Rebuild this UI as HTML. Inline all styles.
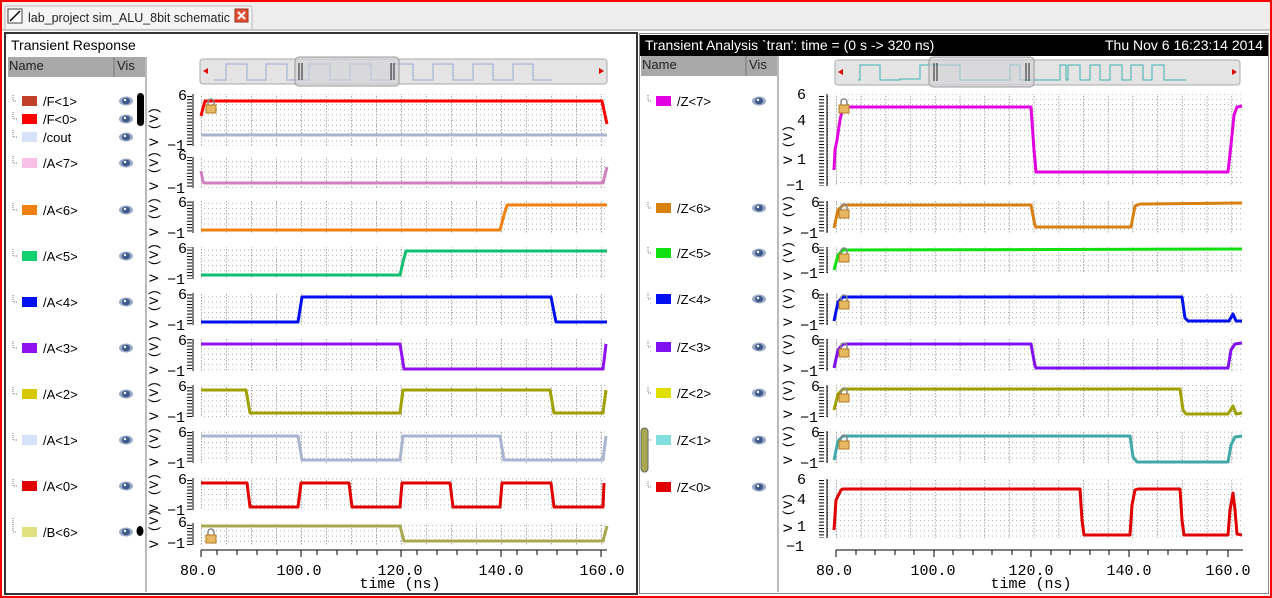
<!DOCTYPE html>
<html><head><meta charset="utf-8"><style>
body{margin:0;width:1272px;height:598px;overflow:hidden;background:#fff;font-family:"Liberation Sans",sans-serif}
svg{display:block}
</style></head><body>
<svg width="1272" height="598" xmlns="http://www.w3.org/2000/svg" font-family="Liberation Sans, sans-serif">
<defs>
<pattern id="hd" width="4" height="5.2" patternUnits="userSpaceOnUse"><rect x="0" y="0" width="1" height="1" fill="#b0b0b0"/></pattern>
<pattern id="vdL" width="25" height="3" patternUnits="userSpaceOnUse" x="201"><rect x="0" y="0" width="1" height="1.5" fill="#a8a8a8"/></pattern>
<pattern id="vdR" width="24.7" height="3" patternUnits="userSpaceOnUse" x="836"><rect x="0" y="0" width="1" height="1.5" fill="#a8a8a8"/></pattern>
<pattern id="tk" width="8" height="3.2" patternUnits="userSpaceOnUse"><rect x="3" y="0" width="5" height="1" fill="#000"/></pattern>
<g id="eye"><ellipse cx="0" cy="0" rx="7" ry="4.5" fill="#9aaac8"/><ellipse cx="0" cy="0" rx="4" ry="3.3" fill="#3e5a8a"/><circle cx="-1" cy="-1" r="1.2" fill="#fff"/></g>
<g id="lock"><path d="M-3,-3 v-3 a3,3 0 0 1 6,0 v3" fill="none" stroke="#888" stroke-width="1.5"/><rect x="-5" y="-3" width="10" height="8" fill="#e8b860" stroke="#b07a20"/></g>
</defs>
<rect x="0" y="0" width="1272" height="598" fill="#fff"/>
<rect x="2" y="2" width="1268" height="28" fill="#eee"/>
<path d="M5,29 V8 a2,2 0 0 1 2,-2 H250 a2,2 0 0 1 2,2 V29" fill="#f4f4f4" stroke="#bbb"/>
<rect x="8" y="9" width="14" height="14" fill="#fff" stroke="#444"/><path d="M10,21 L20,11" stroke="#000" stroke-width="1.5"/>
<text x="28" y="22" font-size="13" fill="#222" textLength="202" lengthAdjust="spacingAndGlyphs">lab_project sim_ALU_8bit schematic</text>
<rect x="235" y="9" width="13" height="13" fill="#e05030" stroke="#a03020"/><path d="M238,12 l7,7 M245,12 l-7,7" stroke="#fff" stroke-width="2"/>
<line x1="2" y1="30" x2="1270" y2="30" fill="none" stroke="#999"/>
<rect x="1" y="1" width="1270" height="596" fill="none" stroke="#f00" stroke-width="2"/>

<!-- LEFT PANEL -->
<rect x="5" y="33" width="632" height="561" fill="#fff" stroke="#333" stroke-width="2"/>
<text x="11" y="50" font-size="14" fill="#000">Transient Response</text>
<rect x="8" y="57" width="137" height="20" fill="#a8a8a8"/>
<line x1="114" y1="57" x2="114" y2="77" stroke="#777"/>
<text x="9" y="70" font-size="13" fill="#222">Name</text><text x="117" y="70" font-size="13" fill="#222">Vis</text>
<line x1="146" y1="57" x2="146" y2="592" stroke="#bbb" stroke-width="2"/>
<g font-size="13" fill="#000">
<path d="M13,95 v6 h4 M13,112 v7 h4 M13,130 v7 h4 M13,156 v7 h4 M13,203 v7 h4 M13,249 v7 h4 M13,295 v7 h4 M13,341 v7 h4 M13,387 v7 h4 M13,433 v7 h4 M13,479 v7 h4 M13,518 v14 h4" stroke="#777" stroke-dasharray="1,1" fill="none"/>
<rect x="22" y="96" width="15" height="10" fill="#c04028"/><text x="43" y="106">/F&lt;1&gt;</text>
<rect x="22" y="114" width="15" height="10" fill="#ff0000"/><text x="43" y="124">/F&lt;0&gt;</text>
<rect x="22" y="132" width="15" height="10" fill="#d6e2fa"/><text x="43" y="142">/cout</text>
<rect x="22" y="158" width="15" height="10" fill="#f8c0e4"/><text x="43" y="168">/A&lt;7&gt;</text>
<rect x="22" y="205" width="15" height="10" fill="#f08010"/><text x="43" y="215">/A&lt;6&gt;</text>
<rect x="22" y="251" width="15" height="10" fill="#10d070"/><text x="43" y="261">/A&lt;5&gt;</text>
<rect x="22" y="297" width="15" height="10" fill="#0010f0"/><text x="43" y="307">/A&lt;4&gt;</text>
<rect x="22" y="343" width="15" height="10" fill="#9010f0"/><text x="43" y="353">/A&lt;3&gt;</text>
<rect x="22" y="389" width="15" height="10" fill="#d8c800"/><text x="43" y="399">/A&lt;2&gt;</text>
<rect x="22" y="435" width="15" height="10" fill="#d6e2fa"/><text x="43" y="445">/A&lt;1&gt;</text>
<rect x="22" y="481" width="15" height="10" fill="#e00000"/><text x="43" y="491">/A&lt;0&gt;</text>
<rect x="22" y="527" width="15" height="10" fill="#e0e080"/><text x="43" y="537">/B&lt;6&gt;</text>
</g>
<use href="#eye" x="126" y="101"/><use href="#eye" x="126" y="119"/><use href="#eye" x="126" y="137"/><use href="#eye" x="126" y="163"/><use href="#eye" x="126" y="210"/><use href="#eye" x="126" y="256"/><use href="#eye" x="126" y="302"/><use href="#eye" x="126" y="348"/><use href="#eye" x="126" y="394"/><use href="#eye" x="126" y="440"/><use href="#eye" x="126" y="486"/><use href="#eye" x="126" y="532"/>
<rect x="137" y="93" width="7" height="33" rx="3.5" fill="#000"/>
<ellipse cx="140" cy="531" rx="3.5" ry="5" fill="#000"/>
<rect x="200" y="59" width="407" height="25" rx="3" fill="#e4e4e4" stroke="#aaa"/>
<path d="M203,71 l5,-3 v6z" fill="#d00"/><path d="M604,71 l-5,-3 v6z" fill="#d00"/>
<path d="M214,80 H226 V64 H247 V80 H266 V64 H287 V80 H309 V64 H330 V80 H350 V64 H371 V80 H392 V64 H413 V80 H433 V64 H453 V80 H473 V64 H493 V80 H513 V64 H533 V80 H552" fill="none" stroke="#9aaad0"/>
<rect x="295" y="57" width="104" height="29" rx="4" fill="rgba(210,210,215,0.6)" stroke="#999"/>
<path d="M299,63 v17 M302,63 v17 M391,63 v17 M394,63 v17" stroke="#222"/>
<g>
<rect x="201" y="94" width="406" height="52" fill="url(#hd)"/><rect x="201" y="94" width="406" height="52" fill="url(#vdL)"/>
<rect x="201" y="157" width="406" height="31" fill="url(#hd)"/><rect x="201" y="157" width="406" height="31" fill="url(#vdL)"/>
<rect x="201" y="201" width="406" height="32" fill="url(#hd)"/><rect x="201" y="201" width="406" height="32" fill="url(#vdL)"/>
<rect x="201" y="247" width="406" height="32" fill="url(#hd)"/><rect x="201" y="247" width="406" height="32" fill="url(#vdL)"/>
<rect x="201" y="293" width="406" height="32" fill="url(#hd)"/><rect x="201" y="293" width="406" height="32" fill="url(#vdL)"/>
<rect x="201" y="339" width="406" height="32" fill="url(#hd)"/><rect x="201" y="339" width="406" height="32" fill="url(#vdL)"/>
<rect x="201" y="385" width="406" height="32" fill="url(#hd)"/><rect x="201" y="385" width="406" height="32" fill="url(#vdL)"/>
<rect x="201" y="431" width="406" height="32" fill="url(#hd)"/><rect x="201" y="431" width="406" height="32" fill="url(#vdL)"/>
<rect x="201" y="478" width="406" height="32" fill="url(#hd)"/><rect x="201" y="478" width="406" height="32" fill="url(#vdL)"/>
<rect x="201" y="523" width="406" height="22" fill="url(#hd)"/><rect x="201" y="523" width="406" height="22" fill="url(#vdL)"/>
</g>
<g>
<rect x="185" y="94" width="9" height="52" fill="url(#tk)"/><rect x="185" y="157" width="9" height="31" fill="url(#tk)"/><rect x="185" y="201" width="9" height="32" fill="url(#tk)"/><rect x="185" y="247" width="9" height="32" fill="url(#tk)"/><rect x="185" y="293" width="9" height="32" fill="url(#tk)"/><rect x="185" y="339" width="9" height="32" fill="url(#tk)"/><rect x="185" y="385" width="9" height="32" fill="url(#tk)"/><rect x="185" y="431" width="9" height="32" fill="url(#tk)"/><rect x="185" y="478" width="9" height="32" fill="url(#tk)"/><rect x="185" y="523" width="9" height="22" fill="url(#tk)"/>
<path d="M193,94 v52 M193,157 v31 M193,201 v32 M193,247 v32 M193,293 v32 M193,339 v32 M193,385 v32 M193,431 v32 M193,478 v32 M193,523 v22" stroke="#000"/>
</g>
<g font-family="Liberation Mono, monospace" font-size="15" fill="#000">
<text x="178" y="100">6</text><text x="167" y="150">−1</text>
<text x="178" y="160">6</text><text x="167" y="193">−1</text>
<text x="178" y="207">6</text><text x="167" y="238">−1</text>
<text x="178" y="253">6</text><text x="167" y="284">−1</text>
<text x="178" y="299">6</text><text x="167" y="330">−1</text>
<text x="178" y="345">6</text><text x="167" y="376">−1</text>
<text x="178" y="391">6</text><text x="167" y="422">−1</text>
<text x="178" y="437">6</text><text x="167" y="468">−1</text>
<text x="178" y="484">6</text><text x="167" y="515">−1</text>
<text x="178" y="527">6</text><text x="167" y="548">−1</text>
</g>
<g font-family="Liberation Mono, monospace" font-size="13" fill="#000">
<text transform="translate(158,146) rotate(-90)">V (V)</text>
<text transform="translate(158,190) rotate(-90)">V (V)</text>
<text transform="translate(158,236) rotate(-90)">V (V)</text>
<text transform="translate(158,282) rotate(-90)">V (V)</text>
<text transform="translate(158,328) rotate(-90)">V (V)</text>
<text transform="translate(158,374) rotate(-90)">V (V)</text>
<text transform="translate(158,420) rotate(-90)">V (V)</text>
<text transform="translate(158,466) rotate(-90)">V (V)</text>
<text transform="translate(158,512) rotate(-90)">V (V)</text>
<text transform="translate(158,548) rotate(-90)">V (V)</text>
</g>
<g fill="none" stroke-width="3" stroke-linejoin="round">
<polyline stroke="#a8b4d0" points="201,135 607,135"/>
<polyline stroke="#ff0000" points="201,116 203,108 205,101 602,101 605,115 607,124"/>
<polyline stroke="#d080c0" points="201,171 203,182 205,183 603,183 607,167"/>
<polyline stroke="#f08010" points="201,230 500,230 504,215 507,205 607,205"/>
<polyline stroke="#10c070" points="201,275 400,275 403,262 406,251 607,251"/>
<polyline stroke="#0010f0" points="201,322 298,322 302,297 551,297 556,322 607,322"/>
<polyline stroke="#9010f0" points="201,344 400,344 404,369 603,369 606,344"/>
<polyline stroke="#a0a000" points="201,390 246,390 250,413 400,413 403,390 550,390 554,413 603,413 606,390"/>
<polyline stroke="#a8b4d0" points="201,436 298,436 302,460 400,460 403,436 500,436 504,460 603,460 606,436"/>
<polyline stroke="#e00000" points="201,483 247,483 250,507 298,507 301,483 349,483 352,507 400,507 402,483 450,483 453,507 500,507 502,483 551,483 554,507 603,507 604,483"/>
<polyline stroke="#a8a850" points="201,526 400,526 404,541 603,541 607,526"/>
</g>
<use href="#lock" x="211" y="108"/><use href="#lock" x="211" y="538"/>
<line x1="201" y1="550" x2="607" y2="550" stroke="#000"/>
<path d="M217,550v5 M237,550v5 M257,550v5 M277,550v5 M301,550v7 M317,550v5 M337,550v5 M357,550v5 M377,550v5 M401,550v7 M417,550v5 M437,550v5 M457,550v5 M477,550v5 M501,550v7 M517,550v5 M537,550v5 M557,550v5 M577,550v5 M601,550v7 M201,550v7" stroke="#000"/>
<g font-family="Liberation Mono, monospace" font-size="15" fill="#000" text-anchor="middle">
<text x="198" y="575">80.0</text><text x="299" y="575">100.0</text><text x="400" y="575">120.0</text><text x="501" y="575">140.0</text><text x="602" y="575">160.0</text>
<text x="400" y="588">time (ns)</text>
</g>

<!-- RIGHT PANEL -->
<rect x="639.5" y="33.5" width="629" height="560" fill="#fff" stroke="#888" stroke-width="1"/>
<rect x="640" y="35" width="628" height="21" fill="#000"/>
<text x="645" y="50" font-size="14" fill="#fff">Transient Analysis `tran': time = (0 s -&gt; 320 ns)</text>
<text x="1263" y="50" font-size="14" fill="#fff" text-anchor="end">Thu Nov 6 16:23:14 2014</text>
<rect x="641" y="56" width="136" height="20" fill="#a8a8a8"/>
<line x1="746" y1="56" x2="746" y2="76" stroke="#777"/>
<text x="642" y="69" font-size="13" fill="#222">Name</text><text x="749" y="69" font-size="13" fill="#222">Vis</text>
<line x1="778" y1="56" x2="778" y2="592" stroke="#bbb" stroke-width="2"/>
<rect x="641" y="428" width="7" height="44" rx="3.5" fill="#a8a850" stroke="#666"/>
<g font-size="13" fill="#000">
<path d="M648,95 v6 h4 M648,202 v6 h4 M648,247 v6 h4 M648,293 v6 h4 M648,341 v6 h4 M648,387 v6 h4 M648,434 v6 h4 M648,481 v6 h4" stroke="#777" stroke-dasharray="1,1" fill="none"/>
<rect x="656" y="96" width="15" height="10" fill="#e000e0"/><text x="677" y="106">/Z&lt;7&gt;</text>
<rect x="656" y="203" width="15" height="10" fill="#d88010"/><text x="677" y="213">/Z&lt;6&gt;</text>
<rect x="656" y="248" width="15" height="10" fill="#10e010"/><text x="677" y="258">/Z&lt;5&gt;</text>
<rect x="656" y="294" width="15" height="10" fill="#0010f0"/><text x="677" y="304">/Z&lt;4&gt;</text>
<rect x="656" y="342" width="15" height="10" fill="#8010f0"/><text x="677" y="352">/Z&lt;3&gt;</text>
<rect x="656" y="388" width="15" height="10" fill="#e0e000"/><text x="677" y="398">/Z&lt;2&gt;</text>
<rect x="656" y="435" width="15" height="10" fill="#80e0e0"/><text x="677" y="445">/Z&lt;1&gt;</text>
<rect x="656" y="482" width="15" height="10" fill="#e00000"/><text x="677" y="492">/Z&lt;0&gt;</text>
</g>
<use href="#eye" x="759" y="101"/><use href="#eye" x="759" y="208"/><use href="#eye" x="759" y="253"/><use href="#eye" x="759" y="299"/><use href="#eye" x="759" y="347"/><use href="#eye" x="759" y="393"/><use href="#eye" x="759" y="440"/><use href="#eye" x="759" y="487"/>
<rect x="835" y="60" width="405" height="25" rx="3" fill="#e4e4e4" stroke="#aaa"/>
<path d="M838,72 l5,-3 v6z" fill="#d00"/><path d="M1237,72 l-5,-3 v6z" fill="#d00"/>
<path d="M858,80 H860 V65 H880 V80 H900 V79 H920 V65 H960 V80 H1010 V65 H1020 V80 H1060 V65 H1066 V80 H1068 V65 H1080 V80 H1090 V65 H1100 V80 H1110 V65 H1122 V80 H1131 V65 H1143 V80 H1152 V65 H1164 V80 H1186" fill="none" stroke="#40b0b0"/>
<rect x="929" y="57" width="105" height="30" rx="4" fill="rgba(210,210,215,0.6)" stroke="#999"/>
<path d="M934,63 v18 M937,63 v18 M1026,63 v18 M1029,63 v18" stroke="#222"/>
<g>
<rect x="836" y="94" width="407" height="92" fill="url(#hd)"/><rect x="836" y="94" width="407" height="92" fill="url(#vdR)"/>
<rect x="836" y="201" width="407" height="32" fill="url(#hd)"/><rect x="836" y="201" width="407" height="32" fill="url(#vdR)"/>
<rect x="836" y="247" width="407" height="26" fill="url(#hd)"/><rect x="836" y="247" width="407" height="26" fill="url(#vdR)"/>
<rect x="836" y="293" width="407" height="32" fill="url(#hd)"/><rect x="836" y="293" width="407" height="32" fill="url(#vdR)"/>
<rect x="836" y="339" width="407" height="32" fill="url(#hd)"/><rect x="836" y="339" width="407" height="32" fill="url(#vdR)"/>
<rect x="836" y="385" width="407" height="32" fill="url(#hd)"/><rect x="836" y="385" width="407" height="32" fill="url(#vdR)"/>
<rect x="836" y="431" width="407" height="32" fill="url(#hd)"/><rect x="836" y="431" width="407" height="32" fill="url(#vdR)"/>
<rect x="836" y="479" width="407" height="59" fill="url(#hd)"/><rect x="836" y="479" width="407" height="59" fill="url(#vdR)"/>
</g>
<g>
<rect x="819" y="94" width="9" height="92" fill="url(#tk)"/><rect x="819" y="201" width="9" height="32" fill="url(#tk)"/><rect x="819" y="247" width="9" height="26" fill="url(#tk)"/><rect x="819" y="293" width="9" height="32" fill="url(#tk)"/><rect x="819" y="339" width="9" height="32" fill="url(#tk)"/><rect x="819" y="385" width="9" height="32" fill="url(#tk)"/><rect x="819" y="431" width="9" height="32" fill="url(#tk)"/><rect x="819" y="479" width="9" height="59" fill="url(#tk)"/>
<path d="M827,94 v92 M827,201 v32 M827,247 v26 M827,293 v32 M827,339 v32 M827,385 v32 M827,431 v32 M827,479 v59" stroke="#000"/>
</g>
<g font-family="Liberation Mono, monospace" font-size="15" fill="#000">
<text x="797" y="99">6</text><text x="797" y="125">4</text><text x="797" y="164">1</text><text x="786" y="190">−1</text>
<text x="811" y="207">6</text><text x="800" y="238">−1</text>
<text x="811" y="253">6</text><text x="800" y="278">−1</text>
<text x="811" y="299">6</text><text x="800" y="330">−1</text>
<text x="811" y="345">6</text><text x="800" y="376">−1</text>
<text x="811" y="391">6</text><text x="800" y="422">−1</text>
<text x="811" y="437">6</text><text x="800" y="468">−1</text>
<text x="797" y="484">6</text><text x="797" y="504">4</text><text x="797" y="531">1</text><text x="786" y="551">−1</text>
</g>
<g font-family="Liberation Mono, monospace" font-size="13" fill="#000">
<text transform="translate(792,164) rotate(-90)">V (V)</text>
<text transform="translate(792,234) rotate(-90)">V (V)</text>
<text transform="translate(792,280) rotate(-90)">V (V)</text>
<text transform="translate(792,326) rotate(-90)">V (V)</text>
<text transform="translate(792,372) rotate(-90)">V (V)</text>
<text transform="translate(792,418) rotate(-90)">V (V)</text>
<text transform="translate(792,464) rotate(-90)">V (V)</text>
<text transform="translate(792,532) rotate(-90)">V (V)</text>
</g>
<g fill="none" stroke-width="3" stroke-linejoin="round">
<polyline stroke="#e000e0" points="834,170 835,150 837,140 840,120 843,107 1031,107 1034,150 1036,172 1228,172 1231,145 1234,115 1237,107 1242,106"/>
<polyline stroke="#d88010" points="834,228 838,210 843,205 1031,205 1035,226 1036,227 1131,227 1135,206 1140,204 1242,203"/>
<polyline stroke="#10e010" points="834,270 838,255 843,250 1242,249"/>
<polyline stroke="#0010f0" points="834,321 838,302 843,297 1182,297 1185,318 1188,321 1229,321 1233,314 1236,321 1242,321"/>
<polyline stroke="#8010f0" points="834,368 838,350 843,344 1031,344 1035,366 1036,368 1228,368 1231,350 1235,344 1242,343"/>
<polyline stroke="#a0a000" points="834,410 838,394 843,389 1100,389 1130,389 1180,389 1183,410 1186,414 1228,414 1233,406 1236,414 1242,413"/>
<polyline stroke="#40a8a8" points="834,460 838,441 843,436 1130,436 1133,457 1137,462 1228,462 1231,445 1235,437 1242,436"/>
<polyline stroke="#e00000" points="834,530 836,500 841,490 843,489 1080,489 1082,520 1084,535 1130,535 1132,505 1135,490 1138,489 1180,489 1182,520 1184,535 1228,535 1230,510 1233,493 1235,510 1237,534 1242,535"/>
</g>
<use href="#lock" x="844" y="108"/><use href="#lock" x="844" y="213"/><use href="#lock" x="844" y="257"/><use href="#lock" x="844" y="304"/><use href="#lock" x="844" y="352"/><use href="#lock" x="844" y="397"/><use href="#lock" x="844" y="444"/>
<line x1="836" y1="550" x2="1243" y2="550" stroke="#000"/>
<path d="M836,550v7 M856,550v5 M875,550v5 M895,550v5 M914,550v5 M934,550v7 M953,550v5 M973,550v5 M992,550v5 M1012,550v5 M1031,550v7 M1051,550v5 M1070,550v5 M1090,550v5 M1109,550v5 M1129,550v7 M1148,550v5 M1168,550v5 M1187,550v5 M1207,550v5 M1228,550v7" stroke="#000"/>
<g font-family="Liberation Mono, monospace" font-size="15" fill="#000" text-anchor="middle">
<text x="834" y="575">80.0</text><text x="933" y="575">100.0</text><text x="1031" y="575">120.0</text><text x="1129" y="575">140.0</text><text x="1228" y="575">160.0</text>
<text x="1031" y="588">time (ns)</text>
</g>
</svg>
</body></html>
